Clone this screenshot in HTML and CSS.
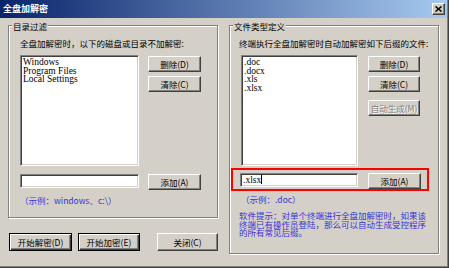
FILE: index.html
```html
<!DOCTYPE html>
<html lang="zh-CN">
<head>
<meta charset="utf-8">
<title>全盘加解密</title>
<link rel="stylesheet" href="styles.css">
</head>
<body>
<div class="window">
  <div class="titlebar">
    <span class="title">全盘加解密</span>
    <span class="close"><svg width="7" height="6" viewBox="0 0 7 6"><path d="M0.5 0.5L6.5 5.5M6.5 0.5L0.5 5.5" stroke="#000" stroke-width="1.6"/></svg></span>
  </div>
  <div class="content">
    <div class="leftcol">
      <div class="group group-left">
        <div class="legend">目录过滤</div>
        <div class="desc">全盘加解密时，以下的磁盘或目录不加解密:</div>
        <div class="row list-row">
          <div class="listbox list-left">
            <div>Windows</div>
            <div>Program Files</div>
            <div>Local Settings</div>
          </div>
          <div class="btncol btncol-left">
            <button class="btn">删除(D)</button>
            <button class="btn">清除(C)</button>
          </div>
        </div>
        <div class="row add-row">
          <div class="input input-left"></div>
          <button class="btn">添加(A)</button>
        </div>
        <div class="hint">（示例：windows、c:\）</div>
      </div>
      <div class="actions">
        <button class="btn btn-default w-decrypt">开始解密(D)</button>
        <button class="btn btn-default w-encrypt">开始加密(E)</button>
        <button class="btn w-close">关闭(C)</button>
      </div>
    </div>
    <div class="group group-right">
      <div class="legend">文件类型定义</div>
      <div class="desc desc-right">终端执行全盘加解密时自动加解密如下后缀的文件:</div>
      <div class="row list-row">
        <div class="listbox list-right">
          <div>.doc</div>
          <div>.docx</div>
          <div>.xls</div>
          <div>.xlsx</div>
        </div>
        <div class="btncol btncol-right">
          <button class="btn btn-narrow">删除(D)</button>
          <button class="btn btn-narrow">清除(C)</button>
          <button class="btn btn-narrow btn-disabled btn-gap">自动生成(M)</button>
        </div>
      </div>
      <div class="redbox">
        <div class="input input-right">.xlsx<span class="caret"></span></div>
        <button class="btn">添加(A)</button>
      </div>
      <div class="hint hint-right">（示例：.doc）</div>
      <div class="tip">软件提示：对单个终端进行全盘加解密时，如果该终端已有操作员登陆，那么可以自动生成受控程序的所有常见后缀。</div>
    </div>
  </div>
</div>
</body>
</html>
```
FILE: styles.css
```css
* { box-sizing: border-box; }
html, body { margin: 0; padding: 0; }
body {
  width: 449px;
  height: 268px;
  overflow: hidden;
  background: #D4D0C8;
  font-family: "Noto Sans CJK SC", "Liberation Sans", sans-serif;
  font-size: 8.5px;
  color: #000;
}
.window {
  width: 449px;
  height: 268px;
  border-right: 1px solid #404040;
  border-bottom: 1px solid #404040;
  box-shadow: inset -1px -1px 0 #808080;
  display: flex;
  flex-direction: column;
}
.titlebar {
  flex: none;
  height: 18px;
  margin-right: 1px;
  padding: 0 2px 0 3px;
  background: linear-gradient(to right, #0A246A, #A6CAF0);
  display: flex;
  align-items: center;
  justify-content: space-between;
}
.title {
  color: #fff;
  font-weight: bold;
  font-size: 9px;
  line-height: 12px;
}
.close {
  width: 13px;
  height: 12px;
  background: #D4D0C8;
  border: 1px solid;
  border-color: #fff #404040 #404040 #fff;
  box-shadow: inset -1px -1px 0 #808080;
  display: flex;
  align-items: center;
  justify-content: center;
}
.content {
  display: flex;
  gap: 11px;
  padding: 7px 0 0 8px;
}
.leftcol {
  width: 210px;
  display: flex;
  flex-direction: column;
}
.group {
  border: 1px solid #808080;
  box-shadow: inset 1px 1px 0 #fff, 1px 1px 0 #fff;
  padding-left: 11px;
  display: flex;
  flex-direction: column;
}
.group-left { height: 193px; }
.group-right { width: 210px; height: 229px; }
.legend {
  align-self: flex-start;
  margin: -5px 0 0 -8px;
  padding: 0 1px;
  background: #D4D0C8;
  line-height: 10px;
}
.desc {
  margin-top: 7px;
  line-height: 10px;
  white-space: nowrap;
}
.desc-right { margin-left: -2px; }
.row { display: flex; align-items: flex-start; }
.list-row { margin-top: 7px; }
.listbox {
  height: 111px;
  background: #fff;
  border: 1px solid;
  border-color: #808080 #fff #fff #808080;
  box-shadow: inset 1px 1px 0 #404040, inset -1px -1px 0 #D4D0C8;
  padding: 2px 2px;
  font-family: "Liberation Serif", serif;
  font-size: 9.5px;
  line-height: 8.5px;
}
.list-left { width: 119px; }
.list-right { width: 117px; }
.btncol {
  display: flex;
  flex-direction: column;
  gap: 4px;
  margin-top: 1px;
}
.btncol-left { margin-left: 9px; }
.btncol-right { margin-left: 10px; }
.btn {
  width: 53px;
  height: 16px;
  margin: 0;
  padding: 0;
  background: #D4D0C8;
  border: 1px solid;
  border-color: #fff #404040 #404040 #fff;
  box-shadow: inset -1px -1px 0 #808080;
  font-family: inherit;
  font-size: 8.5px;
  line-height: 12px;
  color: #000;
  white-space: nowrap;
}
.btn-narrow { width: 52px; }
.btn-gap { margin-top: 4px; }
.btn-disabled {
  color: #808080;
  text-shadow: 1px 1px 0 #fff;
}
.btn-default {
  border: 1px solid #000;
  box-shadow: inset 1px 1px 0 #fff, inset -1px -1px 0 #404040, inset -2px -2px 0 #808080;
}
.add-row {
  margin-top: 8px;
  gap: 9px;
}
.input {
  height: 14px;
  background: #fff;
  border: 1px solid;
  border-color: #808080 #fff #fff #808080;
  box-shadow: inset 1px 1px 0 #404040, inset -1px -1px 0 #D4D0C8;
  padding: 0 2px;
  font-family: "Liberation Serif", serif;
  font-size: 9.5px;
  line-height: 12px;
}
.input-left { width: 119px; }
.input-right { width: 118px; }
.caret {
  display: inline-block;
  width: 1px;
  height: 9px;
  background: #000;
  vertical-align: -1px;
}
.hint {
  margin-top: 5px;
  line-height: 10px;
  color: #3535D8;
  white-space: nowrap;
}
.hint-right { margin-top: 3px; }
.redbox {
  width: 198px;
  margin: 2px 0 0 -10px;
  padding: 3px 6px 0 7px;
  border: 2px solid #F00;
  display: flex;
  align-items: flex-start;
  gap: 10px;
}
.tip {
  width: 190px;
  margin: 7px 0 0 -2px;
  line-height: 8.5px;
  color: #3535D8;
}
.actions {
  display: flex;
  margin-top: 15px;
  padding-left: 1px;
}
.actions .btn { height: 18px; }
.w-decrypt { width: 63px; }
.w-encrypt { width: 62px; margin-left: 6px; }
.w-close { width: 61px; margin-left: 17px; }
```
